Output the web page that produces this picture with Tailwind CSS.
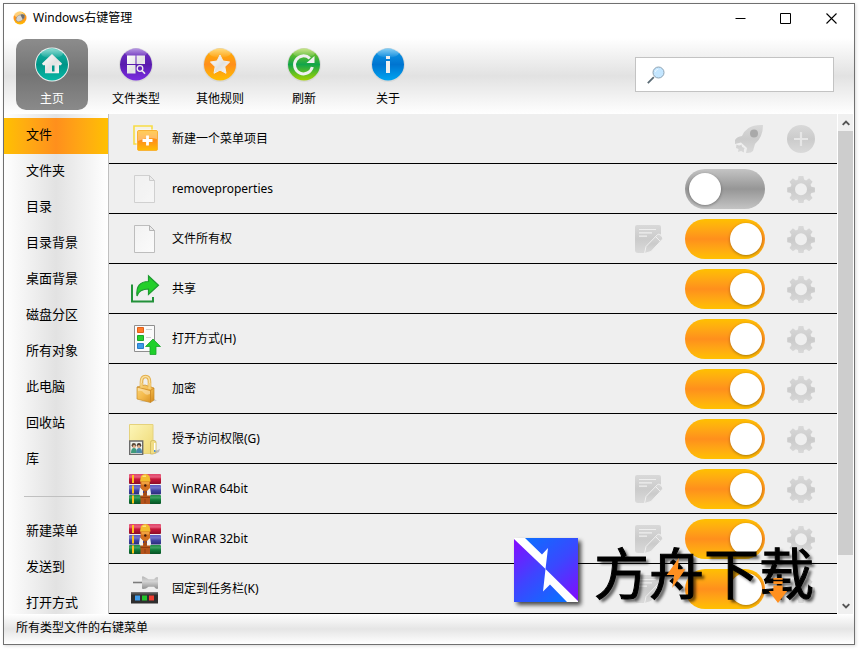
<!DOCTYPE html>
<html lang="zh-CN">
<head>
<meta charset="utf-8">
<meta name="viewport" content="width=device-width, initial-scale=1">
<title>Windows右键管理</title>
<script src="https://cdn.jsdelivr.net/npm/@tailwindcss/browser@4"></script>
</head>
<body class="h-screen bg-white pt-[3px] pr-1 pb-1 pl-[3px] font-['Noto_Sans','Noto_Sans_CJK_SC',sans-serif] text-xs text-black">

<svg class="absolute size-0" aria-hidden="true">
  <defs>
    <linearGradient id="g-grey" x1="0" y1="0" x2="0" y2="1"><stop offset="0" stop-color="#d9d9d9"/><stop offset=".5" stop-color="#cbcbcb"/><stop offset="1" stop-color="#dadada"/></linearGradient>
    <linearGradient id="g-white" x1="0" y1="0" x2="1" y2="1"><stop offset="0" stop-color="#fff"/><stop offset=".55" stop-color="#e2e2e2"/><stop offset="1" stop-color="#fafafa"/></linearGradient>
    <linearGradient id="g-shine" x1="0" y1="0" x2="0" y2="1"><stop offset="0" stop-color="#fff" stop-opacity=".5"/><stop offset="1" stop-color="#fff" stop-opacity=".05"/></linearGradient>
    <linearGradient id="g-teal" x1="0" y1="0" x2="0" y2="1"><stop offset="0" stop-color="#17b3a3"/><stop offset=".5" stop-color="#009588"/><stop offset="1" stop-color="#06b8a6"/></linearGradient>
    <linearGradient id="g-purple" x1="0" y1="0" x2="0" y2="1"><stop offset="0" stop-color="#6d2fc4"/><stop offset=".5" stop-color="#5a1cae"/><stop offset="1" stop-color="#7a2be2"/></linearGradient>
    <linearGradient id="g-orange" x1="0" y1="0" x2="0" y2="1"><stop offset="0" stop-color="#ffb400"/><stop offset=".5" stop-color="#ff8f1c"/><stop offset="1" stop-color="#ffbe00"/></linearGradient>
    <linearGradient id="g-green" x1="0" y1="0" x2="0" y2="1"><stop offset="0" stop-color="#8ec918"/><stop offset=".5" stop-color="#12a54a"/><stop offset="1" stop-color="#a3d400"/></linearGradient>
    <linearGradient id="g-blue" x1="0" y1="0" x2="0" y2="1"><stop offset="0" stop-color="#0f9be8"/><stop offset=".5" stop-color="#0074d0"/><stop offset="1" stop-color="#00a4f0"/></linearGradient>
    <linearGradient id="g-page" x1="0" y1="0" x2="1" y2="1"><stop offset="0" stop-color="#f2f2f2"/><stop offset="1" stop-color="#fbfbfb"/></linearGradient>
    <linearGradient id="g-red-book" x1="0" y1="0" x2="0" y2="1"><stop offset="0" stop-color="#e0456a"/><stop offset=".3" stop-color="#e8607f"/><stop offset=".5" stop-color="#c8173a"/><stop offset="1" stop-color="#8d0f26"/></linearGradient>
    <linearGradient id="g-blue-book" x1="0" y1="0" x2="0" y2="1"><stop offset="0" stop-color="#5a5cc0"/><stop offset=".3" stop-color="#7375c8"/><stop offset=".55" stop-color="#4346a6"/><stop offset="1" stop-color="#292b78"/></linearGradient>
    <linearGradient id="g-green-book" x1="0" y1="0" x2="0" y2="1"><stop offset="0" stop-color="#1e8c46"/><stop offset=".3" stop-color="#3fa060"/><stop offset=".55" stop-color="#107a38"/><stop offset="1" stop-color="#075024"/></linearGradient>
    <linearGradient id="g-gold" x1="0" y1="0" x2="1" y2="1"><stop offset="0" stop-color="#fbd67c"/><stop offset=".5" stop-color="#f3b94a"/><stop offset="1" stop-color="#d48a1c"/></linearGradient>
    <linearGradient id="g-folder" x1="0" y1="0" x2="1" y2="1"><stop offset="0" stop-color="#fdf6b8"/><stop offset="1" stop-color="#eed873"/></linearGradient>
    <linearGradient id="g-metal" x1="0" y1="0" x2="0" y2="1"><stop offset="0" stop-color="#b4b4b4"/><stop offset=".4" stop-color="#d4d4d4"/><stop offset="1" stop-color="#909090"/></linearGradient>
    <linearGradient id="g-logo-upper" gradientUnits="userSpaceOnUse" x1="16" y1="0" x2="64" y2="56"><stop offset="0" stop-color="#0f6cff"/><stop offset=".5" stop-color="#3a48ff"/><stop offset="1" stop-color="#7a12ff"/></linearGradient>
    <linearGradient id="g-logo-lower" gradientUnits="userSpaceOnUse" x1="0" y1="6" x2="46" y2="60"><stop offset="0" stop-color="#8010ff"/><stop offset=".5" stop-color="#3f44ff"/><stop offset="1" stop-color="#0f6cff"/></linearGradient>
  </defs>
  <symbol id="gear" viewBox="0 0 28 28">
    <path fill="url(#g-grey)" fill-rule="evenodd" d="M11.6 1h4.8l.7 3.6 2 .8 3-2.100 3.500 3.400-2.100 3.100.9 2 3.500.6v4.800l-3.500.7-.9 2 2.100 3-3.500 3.400-3-2-2 .8-.7 3.500h-4.800l-.7-3.500-2-.8-3 2-3.400-3.400 2-3-.8-2L.2 17.200v-4.800l3.500-.6.8-2-2-3.100 3.400-3.400 3 2.100 2-.8zM14 8.300a6 6 0 1 0 0 12 6 6 0 0 0 0-12z"/>
  </symbol>
  <symbol id="edit" viewBox="0 0 28 28">
    <path fill="url(#g-grey)" d="M2 0h22a2 2 0 0 1 2 2v7L10 24v4H3a3 3 0 0 1-3-3V2a2 2 0 0 1 2-2z"/>
    <path stroke="#efefef" stroke-width="1.200" fill="none" d="M4 4.500h17M4 7.800h13M4 11.200h8"/>
    <path fill="url(#g-grey)" stroke="#efefef" stroke-width="1" d="M9.500 28.500l1.500-7L22.500 9.500q1.500-1 2.800.3l2 2.200q1 1.200 0 2.300L16 26.500z"/>
    <path stroke="#efefef" stroke-width="1" d="M20.500 11.500l5 5"/>
  </symbol>
  <symbol id="page" viewBox="0 0 32 32">
    <path fill="url(#g-page)" stroke="#bdbdbd" d="M5.500 2.500h15l5 5v22h-20z"/>
    <path fill="#e9e9e9" stroke="#b5b5b5" d="M20.500 2.500v5h5z"/>
  </symbol>
  <symbol id="winrar" viewBox="0 0 32 32">
    <rect x="0" y="1" width="32" height="10" rx="1" fill="url(#g-red-book)"/>
    <rect x="0" y="12" width="32" height="9.500" rx="1" fill="url(#g-blue-book)"/>
    <rect x="0" y="22" width="32" height="9" rx="1" fill="url(#g-green-book)"/>
    <path fill="#ffc31a" d="M3 2h2v8H3zM3 12.500h2v8H3zM3 22.500h2v8H3z"/>
    <path fill="#b5541c" d="M11.500 20h9.500v11h-9.500z"/>
    <path fill="#8f3d12" d="M11.500 24h9.500v1h-9.500zM15.500 26h1v4h-1z"/>
    <path fill="#f4f4f4" d="M11 14.500l3 2.500v5.500h-3l-1-2zM21 14.500l-3 2.500v5.500h3.500l.5-2z"/>
    <path fill="#d3701f" d="M11.500 8h9.500v7l-3 3h-3.500l-3-3z"/>
    <path fill="#f0a040" d="M12.500 9h7.500v2.500h-7.500z"/>
    <path fill="#f2bd2e" d="M12 3q4.500-4 8.500 0l1 5.500h-10.500z"/>
    <path fill="#ffe07a" d="M13.500 2.500h3.500v1.500h-3.500z"/>
    <circle cx="16.300" cy="12.500" r="1.200" fill="#3c1a08"/>
    <path fill="#a04a18" d="M15 17.500h2.500v5H15z"/>
  </symbol>
</svg>

<div class="relative flex h-full flex-col overflow-hidden border border-[#707070] bg-white shadow-[1px_1px_3px_rgba(0,0,0,0.15)]">

  <header class="flex h-[34px] shrink-0 items-start pl-2">
    <div class="flex h-7 grow items-center gap-[5px]">
      <svg class="size-4" viewBox="0 0 16 16" aria-hidden="true">
        <circle cx="8" cy="8" r="6.500" fill="url(#g-orange)"/>
        <ellipse cx="7" cy="4.500" rx="5" ry="3" fill="#ffe9c0" opacity=".6"/>
        <path d="M4 9.300q0-2.500 2.500-3.800L10 4.300l2.500.7-.3 3-2.700 2.800-3 1Q4.200 11.700 4 9.300z" fill="#d2d2d0" stroke="#85817a" stroke-width=".5"/>
        <path d="M8.500 5L10 4.300l2.500.7-.3 3-1.400 1.400z" fill="#6d6e6e"/>
      </svg>
      <h1 class="text-xs">Windows右键管理</h1>
    </div>
    <div class="flex h-7">
      <button type="button" aria-label="最小化" class="flex w-[45px] items-center justify-center"><svg class="size-[11px]" viewBox="0 0 11 11"><path d="M.5 5.500h10" stroke="#000"/></svg></button>
      <button type="button" aria-label="最大化" class="flex w-[45px] items-center justify-center"><svg class="size-[11px]" viewBox="0 0 11 11"><path d="M.5.500h10v10H.5z" fill="none" stroke="#000"/></svg></button>
      <button type="button" aria-label="关闭" class="flex w-[46px] items-center justify-center"><svg class="size-[11px]" viewBox="0 0 11 11"><path d="M.5.500l10 10M10.500.500l-10 10" stroke="#000" stroke-width="1.100"/></svg></button>
    </div>
  </header>

  <div class="flex h-[76px] shrink-0 items-start justify-between bg-linear-to-b from-white via-[#e2e2e2] to-white pr-5 pl-3">
    <nav class="flex gap-3 pt-px" aria-label="工具栏">
      <button type="button" class="flex h-[71px] w-[72px] flex-col items-center gap-2 rounded-[10px] bg-linear-to-b from-[#8c8c8c] via-[#747474] to-[#8a8a8a] pt-2 leading-4 text-white">
        <svg class="size-9 shrink-0" viewBox="0 0 36 36" aria-hidden="true">
          <circle cx="18" cy="17.500" r="17" fill="#f0f0f0"/><circle cx="18" cy="17.500" r="16" fill="url(#g-teal)"/><ellipse cx="18" cy="6.500" rx="11" ry="4.500" fill="url(#g-shine)"/>
          <path fill="url(#g-white)" d="M18 7l10 9.500-1 1.700h-2v8H11v-8H9l-1-1.700z"/><path fill="#00968a" d="M18 18.500h2.500v6H18z"/>
        </svg>
        <span>主页</span>
      </button>
      <button type="button" class="flex h-[71px] w-[72px] flex-col items-center gap-2 rounded-[10px] pt-2 leading-4">
        <svg class="size-9 shrink-0" viewBox="0 0 36 36" aria-hidden="true">
          <circle cx="18" cy="18" r="17" fill="#d9d9d9"/><circle cx="18" cy="17.500" r="16" fill="url(#g-purple)"/><ellipse cx="18" cy="6" rx="11" ry="4.500" fill="url(#g-shine)"/>
          <path fill="url(#g-white)" d="M9 8.500h8.500V17H9zM18.500 8.500H27V17h-8.500zM9 18h8.500v8.500H9z"/>
          <circle cx="22" cy="21.500" r="2.800" fill="none" stroke="#eee" stroke-width="1.300"/><path stroke="#eee" stroke-width="1.600" d="M24 23.500l3 3.300"/>
        </svg>
        <span>文件类型</span>
      </button>
      <button type="button" class="flex h-[71px] w-[72px] flex-col items-center gap-2 rounded-[10px] pt-2 leading-4">
        <svg class="size-9 shrink-0" viewBox="0 0 36 36" aria-hidden="true">
          <circle cx="18" cy="18" r="17" fill="#d9d9d9"/><circle cx="18" cy="17.500" r="16" fill="url(#g-orange)"/><ellipse cx="18" cy="6" rx="11" ry="4.500" fill="url(#g-shine)"/>
          <path fill="url(#g-white)" stroke="#eee" stroke-linejoin="round" d="M18 8l3 6 6.600 1-4.800 4.700 1.200 6.600-6-3.200-6 3.200 1.200-6.600L8.400 15l6.600-1z"/>
        </svg>
        <span>其他规则</span>
      </button>
      <button type="button" class="flex h-[71px] w-[72px] flex-col items-center gap-2 rounded-[10px] pt-2 leading-4">
        <svg class="size-9 shrink-0" viewBox="0 0 36 36" aria-hidden="true">
          <circle cx="18" cy="18" r="17" fill="#d9d9d9"/><circle cx="18" cy="17.500" r="16" fill="url(#g-green)"/><ellipse cx="18" cy="6" rx="11" ry="4.500" fill="url(#g-shine)"/>
          <path fill="none" stroke="#f0f0f0" stroke-width="3" d="M26.300 20a9 9 0 1 1-2.500-8.600"/>
          <path fill="#f0f0f0" d="M28.500 9v7h-8z"/>
        </svg>
        <span>刷新</span>
      </button>
      <button type="button" class="flex h-[71px] w-[72px] flex-col items-center gap-2 rounded-[10px] pt-2 leading-4">
        <svg class="size-9 shrink-0" viewBox="0 0 36 36" aria-hidden="true">
          <circle cx="18" cy="18" r="17" fill="#d9d9d9"/><circle cx="18" cy="17.500" r="16" fill="url(#g-blue)"/><ellipse cx="18" cy="6" rx="11" ry="4.500" fill="url(#g-shine)"/>
          <path fill="#f0f0f0" d="M16 9h4v3h-4zM16 14h4v12h-4z"/>
        </svg>
        <span>关于</span>
      </button>
    </nav>
    <label class="mt-[19px] flex h-[35px] w-[199px] items-center gap-2 border border-[#c3c3c3] bg-white pr-2 pl-[11px]">
      <svg class="size-[18px] shrink-0" viewBox="0 0 18 18" aria-hidden="true">
        <path d="M.8 17.200l6-6" stroke="#5a6a74" stroke-width="1.800"/>
        <circle cx="11.500" cy="6.500" r="5.500" fill="#c4e6ff" stroke="#8ea3b3"/>
        <path d="M8.300 6a3.300 3.300 0 0 1 3-2.800" stroke="#e9f6ff" fill="none"/>
      </svg>
      <input type="search" aria-label="搜索" class="h-full w-full min-w-0 bg-transparent outline-none">
    </label>
  </div>

  <main class="flex min-h-0 grow">
    <nav class="w-[105px] shrink-0 overflow-hidden border-r border-[#c0c0c0] bg-linear-to-r from-white via-[#e2e2e2] to-white pt-1 text-[13px]" aria-label="类别">
      <a href="#" class="flex h-9 items-center bg-linear-to-r from-[#ffc000] via-[#ff8f1c] to-[#ffc000] pb-0.5 pl-[22px]" aria-current="page">文件</a>
      <a href="#" class="flex h-9 items-center pb-0.5 pl-[22px]">文件夹</a>
      <a href="#" class="flex h-9 items-center pb-0.5 pl-[22px]">目录</a>
      <a href="#" class="flex h-9 items-center pb-0.5 pl-[22px]">目录背景</a>
      <a href="#" class="flex h-9 items-center pb-0.5 pl-[22px]">桌面背景</a>
      <a href="#" class="flex h-9 items-center pb-0.5 pl-[22px]">磁盘分区</a>
      <a href="#" class="flex h-9 items-center pb-0.5 pl-[22px]">所有对象</a>
      <a href="#" class="flex h-9 items-center pb-0.5 pl-[22px]">此电脑</a>
      <a href="#" class="flex h-9 items-center pb-0.5 pl-[22px]">回收站</a>
      <a href="#" class="flex h-9 items-center pb-0.5 pl-[22px]">库</a>
      <div class="flex h-9 items-center pr-[18px] pl-5" role="separator"><div class="h-px w-full bg-[#c0c0c0]"></div></div>
      <a href="#" class="flex h-9 items-center pb-0.5 pl-[22px]">新建菜单</a>
      <a href="#" class="flex h-9 items-center pb-0.5 pl-[22px]">发送到</a>
      <a href="#" class="flex h-9 items-center pb-0.5 pl-[22px]">打开方式</a>
    </nav>

    <ul class="min-w-0 grow overflow-hidden bg-[#efefef]">
      <li class="flex h-[50px] items-center border-b border-black pr-[22px] pl-5">
        <svg class="mr-[11px] size-8 shrink-0" viewBox="0 0 32 32" aria-hidden="true">
          <path d="M5 3h18v18H5z" fill="#f4f2e8" stroke="#f7dd45" stroke-width="1.600"/>
          <rect x="7.500" y="6.500" width="21.500" height="21.500" rx="1.500" fill="#fff" opacity=".7"/>
          <rect x="8.500" y="7.500" width="20" height="20" rx="1.200" fill="url(#g-orange)" stroke="#f5a21a" stroke-width=".7"/>
          <path d="M9 8h19v8q-9-3-19 2z" fill="#fff" opacity=".35"/>
          <path d="M18.500 12.500v10M13.500 17.500h10" stroke="#fff" stroke-width="2.800"/>
        </svg>
        <span class="grow">新建一个菜单项目</span>
        <button type="button" aria-label="快速新建" class="mr-6 size-[30px]"><svg class="size-[30px]" viewBox="0 0 30 30">
          <path fill="url(#g-grey)" d="M30 1Q21 .5 15.500 4 11 7 9 12 4 12.500 2 16v4l6-1.500 6 5.500-1 5q5 .5 7-2l2-7Q30 13 30 1zM3.500 20.500q3 2 5 0 0 3 3 3.500-1 2-.5 4.500l-3-1.500-3 1 .5-3-2.500-1z"/>
          <circle cx="21" cy="9.500" r="4" fill="#a9a9a9"/>
        </svg></button>
        <button type="button" aria-label="添加" class="size-7"><svg class="size-7" viewBox="0 0 28 28"><circle cx="14" cy="14" r="14" fill="url(#g-grey)"/><path d="M14 7v14M7 14h14" stroke="#e6e6e6" stroke-width="2.200"/></svg></button>
      </li>
      <li class="flex h-[50px] items-center border-b border-black pr-[22px] pl-5">
        <svg class="mr-[11px] size-8 shrink-0 opacity-60" aria-hidden="true"><use href="#page"/></svg>
        <label for="t1" class="grow">removeproperties</label>
        <input id="t1" type="checkbox" class="mt-px mr-[22px] flex h-10 w-20 appearance-none items-center rounded-full bg-linear-to-b from-[#c4c4c4] via-[#969696] to-[#c4c4c4] px-1 before:size-8 before:rounded-full before:bg-white before:shadow-[0_1px_3px_rgba(0,0,0,0.35)] checked:justify-end checked:from-[#ffc000] checked:via-[#ff8f1c] checked:to-[#ffc000] checked:px-[3px]">
        <button type="button" aria-label="设置" class="size-7"><svg class="size-7"><use href="#gear"/></svg></button>
      </li>
      <li class="flex h-[50px] items-center border-b border-black pr-[22px] pl-5">
        <svg class="mr-[11px] size-8 shrink-0" aria-hidden="true"><use href="#page"/></svg>
        <label for="t2" class="grow">文件所有权</label>
        <button type="button" aria-label="编辑" class="mr-[22px] size-7"><svg class="size-7"><use href="#edit"/></svg></button>
        <input id="t2" type="checkbox" checked class="mt-px mr-[22px] flex h-10 w-20 appearance-none items-center rounded-full bg-linear-to-b from-[#c4c4c4] via-[#969696] to-[#c4c4c4] px-1 before:size-8 before:rounded-full before:bg-white before:shadow-[0_1px_3px_rgba(0,0,0,0.35)] checked:justify-end checked:from-[#ffc000] checked:via-[#ff8f1c] checked:to-[#ffc000] checked:px-[3px]">
        <button type="button" aria-label="设置" class="size-7"><svg class="size-7"><use href="#gear"/></svg></button>
      </li>
      <li class="flex h-[50px] items-center border-b border-black pr-[22px] pl-5">
        <svg class="mr-[11px] size-8 shrink-0" viewBox="0 0 32 32" aria-hidden="true">
          <path d="M3 11.500v17h21V24" fill="none" stroke="#23913a" stroke-width="2"/>
          <path d="M8 23Q6.500 8.500 19.500 8.500V3l10 9.300-10 9.200V16Q10 16 8 23z" fill="#23cf2b" stroke="#1d9a30" stroke-width="1.200"/>
        </svg>
        <label for="t3" class="grow">共享</label>
        <input id="t3" type="checkbox" checked class="mt-px mr-[22px] flex h-10 w-20 appearance-none items-center rounded-full bg-linear-to-b from-[#c4c4c4] via-[#969696] to-[#c4c4c4] px-1 before:size-8 before:rounded-full before:bg-white before:shadow-[0_1px_3px_rgba(0,0,0,0.35)] checked:justify-end checked:from-[#ffc000] checked:via-[#ff8f1c] checked:to-[#ffc000] checked:px-[3px]">
        <button type="button" aria-label="设置" class="size-7"><svg class="size-7"><use href="#gear"/></svg></button>
      </li>
      <li class="flex h-[50px] items-center border-b border-black pr-[22px] pl-5">
        <svg class="mr-[11px] size-8 shrink-0" viewBox="0 0 32 32" aria-hidden="true">
          <path d="M5.500 2.500h20v26h-20z" fill="#fbfbfb" stroke="#8f8f8f"/>
          <path d="M8.500 4.500h6v5h-6z" fill="#ff7b29" stroke="#e0601a"/><path d="M8.500 12.500h6v5h-6z" fill="#25cf2c" stroke="#1ba52a"/><path d="M8.500 20.500h6v5h-6z" fill="#3c9ae8" stroke="#2a7cc8"/>
          <path d="M17 6.500h6M17 14.500h5" stroke="#cfcfcf"/>
          <path d="M24 16l7.500 7.500h-4.500V31.500h-6V23.500h-4.500z" fill="#1fd02a" stroke="#1aa32c" stroke-width=".8"/>
        </svg>
        <label for="t4" class="grow">打开方式(H)</label>
        <input id="t4" type="checkbox" checked class="mt-px mr-[22px] flex h-10 w-20 appearance-none items-center rounded-full bg-linear-to-b from-[#c4c4c4] via-[#969696] to-[#c4c4c4] px-1 before:size-8 before:rounded-full before:bg-white before:shadow-[0_1px_3px_rgba(0,0,0,0.35)] checked:justify-end checked:from-[#ffc000] checked:via-[#ff8f1c] checked:to-[#ffc000] checked:px-[3px]">
        <button type="button" aria-label="设置" class="size-7"><svg class="size-7"><use href="#gear"/></svg></button>
      </li>
      <li class="flex h-[50px] items-center border-b border-black pr-[22px] pl-5">
        <svg class="mr-[11px] size-8 shrink-0" viewBox="0 0 32 32" aria-hidden="true">
          <path d="M10 29l18-1-4-3z" fill="#cfcfcf"/>
          <path d="M12.500 15.500V9q0-5.500 4-5.500t4 5.500v8" fill="none" stroke="#e3b04e" stroke-width="3.600"/>
          <path d="M12.300 15.500V9q0-5.500 4.200-5.500t4 5.500v8" fill="none" stroke="#fbe0a0" stroke-width="1.600"/>
          <path d="M8 14l8-2 9 3v12l-3.500 2.500L8 26z" fill="url(#g-gold)" stroke="#c98c28" stroke-width=".7"/>
          <path d="M8 14l13.500 3.500L25 15M21.500 17.500v12" fill="none" stroke="#c58322" stroke-width=".7"/>
          <path d="M12.500 14.500V10M20.500 16v-6" stroke="#f5cf7a" stroke-width="2.400"/>
          <path d="M9 18q4-1 6 2t6 1v-3L9 15z" fill="#fff" opacity=".35"/>
        </svg>
        <label for="t5" class="grow">加密</label>
        <input id="t5" type="checkbox" checked class="mt-px mr-[22px] flex h-10 w-20 appearance-none items-center rounded-full bg-linear-to-b from-[#c4c4c4] via-[#969696] to-[#c4c4c4] px-1 before:size-8 before:rounded-full before:bg-white before:shadow-[0_1px_3px_rgba(0,0,0,0.35)] checked:justify-end checked:from-[#ffc000] checked:via-[#ff8f1c] checked:to-[#ffc000] checked:px-[3px]">
        <button type="button" aria-label="设置" class="size-7"><svg class="size-7"><use href="#gear"/></svg></button>
      </li>
      <li class="flex h-[50px] items-center border-b border-black pr-[22px] pl-5">
        <svg class="mr-[11px] size-8 shrink-0" viewBox="0 0 32 32" aria-hidden="true">
          <path d="M24 29l7-3-1 3-4 2z" fill="#bdbdbd"/>
          <path d="M.5 1.500h23.500v29H.5z" fill="url(#g-folder)" stroke="#e5d27c"/>
          <path d="M21.500 19.500q0-2 2-2h1.500q2 0 2 2v10l-3 1.500h-2.500z" fill="#f1dc83" stroke="#cdb65a" stroke-width=".8"/>
          <path d="M25 20l1.500 0v8H25z" fill="#fff"/><path d="M25 27h1.500v2H25z" fill="#4a90d9"/>
          <path d="M.7 18h13v13.500H.7z" fill="#eef3ec" stroke="#6b6b6b" stroke-width="1.400"/>
          <circle cx="4.800" cy="22.300" r="2.200" fill="#5b4a3a"/><circle cx="10" cy="22.300" r="2.200" fill="#4a3a34"/>
          <circle cx="5.200" cy="23.500" r="1.500" fill="#e0b08c"/><circle cx="9.800" cy="23.500" r="1.500" fill="#e0b08c"/>
          <path d="M2 30q0-5 3-5t2.800 5z" fill="#3f9a7c"/><path d="M7.200 30q0-5 3-5t2.800 5z" fill="#4a86a8"/>
        </svg>
        <label for="t6" class="grow">授予访问权限(G)</label>
        <input id="t6" type="checkbox" checked class="mt-px mr-[22px] flex h-10 w-20 appearance-none items-center rounded-full bg-linear-to-b from-[#c4c4c4] via-[#969696] to-[#c4c4c4] px-1 before:size-8 before:rounded-full before:bg-white before:shadow-[0_1px_3px_rgba(0,0,0,0.35)] checked:justify-end checked:from-[#ffc000] checked:via-[#ff8f1c] checked:to-[#ffc000] checked:px-[3px]">
        <button type="button" aria-label="设置" class="size-7"><svg class="size-7"><use href="#gear"/></svg></button>
      </li>
      <li class="flex h-[50px] items-center border-b border-black pr-[22px] pl-5">
        <svg class="mr-[11px] size-8 shrink-0" aria-hidden="true"><use href="#winrar"/></svg>
        <label for="t7" class="grow">WinRAR 64bit</label>
        <button type="button" aria-label="编辑" class="mr-[22px] size-7"><svg class="size-7"><use href="#edit"/></svg></button>
        <input id="t7" type="checkbox" checked class="mt-px mr-[22px] flex h-10 w-20 appearance-none items-center rounded-full bg-linear-to-b from-[#c4c4c4] via-[#969696] to-[#c4c4c4] px-1 before:size-8 before:rounded-full before:bg-white before:shadow-[0_1px_3px_rgba(0,0,0,0.35)] checked:justify-end checked:from-[#ffc000] checked:via-[#ff8f1c] checked:to-[#ffc000] checked:px-[3px]">
        <button type="button" aria-label="设置" class="size-7"><svg class="size-7"><use href="#gear"/></svg></button>
      </li>
      <li class="flex h-[50px] items-center border-b border-black pr-[22px] pl-5">
        <svg class="mr-[11px] size-8 shrink-0" aria-hidden="true"><use href="#winrar"/></svg>
        <label for="t8" class="grow">WinRAR 32bit</label>
        <button type="button" aria-label="编辑" class="mr-[22px] size-7"><svg class="size-7"><use href="#edit"/></svg></button>
        <input id="t8" type="checkbox" checked class="mt-px mr-[22px] flex h-10 w-20 appearance-none items-center rounded-full bg-linear-to-b from-[#c4c4c4] via-[#969696] to-[#c4c4c4] px-1 before:size-8 before:rounded-full before:bg-white before:shadow-[0_1px_3px_rgba(0,0,0,0.35)] checked:justify-end checked:from-[#ffc000] checked:via-[#ff8f1c] checked:to-[#ffc000] checked:px-[3px]">
        <button type="button" aria-label="设置" class="size-7"><svg class="size-7"><use href="#gear"/></svg></button>
      </li>
      <li class="flex h-[50px] items-center border-b border-black pr-[22px] pl-5">
        <svg class="mr-[11px] size-8 shrink-0" viewBox="0 0 32 32" aria-hidden="true">
          <path d="M4 9.500h10" stroke="#7c7c7c" stroke-width="1.600"/>
          <path d="M13 4q0-.8 1-.8l3 1.600 2.500 1.500h5.500l2-2H29v11.500h-2l-2-2h-5.500L17 15.500l-3 .5q-1 0-1-1z" fill="url(#g-metal)"/>
          <path d="M2 19.500h27v11H2z" fill="#2e2e2e"/><path d="M2 19.500h27v2H2z" fill="#555"/>
          <path d="M6 22.500h5v5H6z" fill="#3f9be8"/><path d="M13 22.500h5v5h-5z" fill="#22c52c"/><path d="M20 22.500h5v5h-5z" fill="#ee3d30"/>
        </svg>
        <label for="t9" class="grow">固定到任务栏(K)</label>
        <button type="button" aria-label="编辑" class="mr-[22px] size-7"><svg class="size-7"><use href="#edit"/></svg></button>
        <input id="t9" type="checkbox" checked class="mt-px mr-[22px] flex h-10 w-20 appearance-none items-center rounded-full bg-linear-to-b from-[#c4c4c4] via-[#969696] to-[#c4c4c4] px-1 before:size-8 before:rounded-full before:bg-white before:shadow-[0_1px_3px_rgba(0,0,0,0.35)] checked:justify-end checked:from-[#ffc000] checked:via-[#ff8f1c] checked:to-[#ffc000] checked:px-[3px]">
        <button type="button" aria-label="设置" class="size-7"><svg class="size-7"><use href="#gear"/></svg></button>
      </li>
    </ul>

    <div class="flex w-[17px] shrink-0 flex-col items-stretch border-x border-white bg-[#f0f0f0]" aria-hidden="true">
      <div class="flex h-[17px] items-center justify-center"><svg class="size-2" viewBox="0 0 8 8"><path d="M.7 5.800L4 2.500l3.300 3.300" fill="none" stroke="#555" stroke-width="1.900"/></svg></div>
      <div class="h-[424px] bg-[#cdcdcd]"></div>
      <div class="grow"></div>
      <div class="flex h-[17px] items-center justify-center"><svg class="size-2" viewBox="0 0 8 8"><path d="M.7 2.200L4 5.500l3.300-3.300" fill="none" stroke="#555" stroke-width="1.900"/></svg></div>
    </div>
  </main>

  <footer class="flex h-[30px] shrink-0 items-center bg-linear-to-b from-white via-[#e5e5e5] to-white pb-0.5 pl-3">所有类型文件的右键菜单</footer>

  <div class="pointer-events-none absolute right-10 bottom-[42px] flex items-center gap-4">
    <svg class="size-16 drop-shadow-[3px_3px_2px_rgba(0,0,0,0.7)]" viewBox="0 0 64 64" aria-hidden="true">
      <path d="M0 0h64v64H0z" fill="#fff"/>
      <path d="M11 0h53v63L31.500 31 34 10l-6 6.500z" fill="url(#g-logo-upper)"/>
      <path d="M0 1l31.500 30L29 53.500l7-7L53 64H0z" fill="url(#g-logo-lower)"/>
    </svg>
    <div class="relative">
      <span class="block font-['Noto_Sans_CJK_SC',sans-serif] text-[55px] leading-[64px] font-normal [-webkit-text-stroke:1px_#000] [text-shadow:3px_3px_3px_rgba(0,0,0,0.6)]">方舟下载</span>
      <svg class="absolute top-5 left-[72px] h-[30px] w-5" viewBox="0 0 20 32" aria-hidden="true"><path d="M13 0L0 18h8l-2 14L20 12h-8z" fill="#ff9020"/></svg>
      <svg class="absolute top-10 left-[174px] h-[26px] w-5" viewBox="0 0 20 28" aria-hidden="true"><path d="M5 0h10v2H5zM5 3.500h10v3H5zM5 8h10v6h5L10 27 0 14h5z" fill="#ff9020"/></svg>
    </div>
  </div>
</div>
</body>
</html>
